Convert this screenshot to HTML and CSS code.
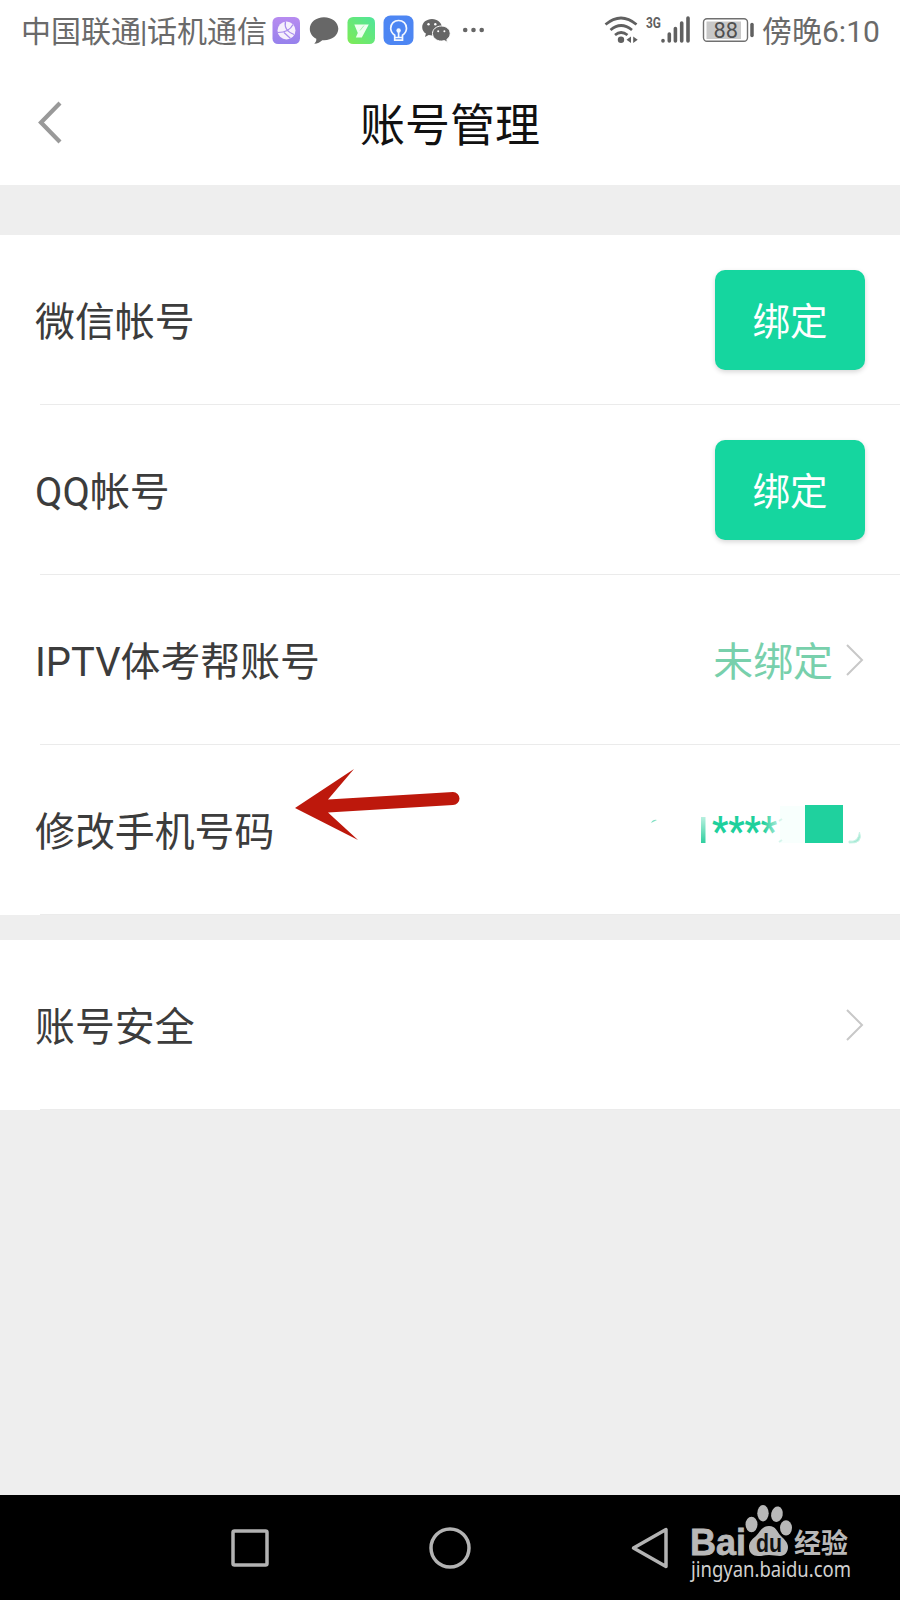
FILE: index.html
```
<!DOCTYPE html>
<html lang="zh-CN">
<head>
    <meta charset="UTF-8">
    <meta name="viewport" content="width=device-width, initial-scale=1.0">
    <title>账号管理</title>
    <link rel="stylesheet" href="styles.css">
</head>
<body>
    <div class="status-bar">
        <span class="carrier">中国联通<span class="bar">|</span>话机通信</span>
        <!-- notification icons -->
        <svg class="status-icons" width="214" height="60" viewBox="270 0 214 60">
            <defs>
                <linearGradient id="purple" x1="0" y1="0" x2="0" y2="1">
                    <stop offset="0" stop-color="#b78bf0"/><stop offset="1" stop-color="#9681ec"/>
                </linearGradient>
                <linearGradient id="green" x1="1" y1="0" x2="0" y2="1">
                    <stop offset="0" stop-color="#4fe59c"/><stop offset="1" stop-color="#7eeb55"/>
                </linearGradient>
            </defs>
            <rect x="272.500" y="17" width="27.500" height="27" rx="5.500" fill="url(#purple)"/>
            <circle cx="286.500" cy="30.500" r="9" fill="#f5effc"/>
            <path d="M285.500 21.500q-2 9 8.500 13M293 24.500q-4 8-15 8M284 32.500l6.500 6" fill="none" stroke="#a689ec" stroke-width="1.200"/>
            <path d="M324 17.300c-8 0-14.200 5-14.200 11.500 0 4.500 2.600 8 6.500 10 .2 2-.5 3.500-2 5 3.200-.3 6-1.700 8-3.600 8.800.8 16-4.400 16-11.400 0-6.500-6.300-11.500-14.300-11.500z" fill="#676767"/>
            <rect x="347.500" y="17" width="27.500" height="27" rx="5.500" fill="url(#green)"/>
            <path d="M354.300 24.500h14.500l-7 13h-6l2-4.500z" fill="#eefff0"/>
            <path d="M360 30.500l4-5" stroke="#a5f2b0" stroke-width="1"/>
            <rect x="383.500" y="15.500" width="30" height="29.500" rx="7" fill="#4d86f3"/>
            <g fill="none" stroke="#f4f8ff" stroke-width="1.700">
                <path d="M394.700 37.500v-2.200c-2.700-1.900-4-4-4-7 0-4.600 3.400-7.800 7.900-7.800s7.900 3.200 7.900 7.800c0 3-1.300 5.100-4 7v2.200zM394.700 37.500v2.700h7.800v-2.700M398.600 30v7"/>
            </g>
            <circle cx="398.600" cy="30.500" r="2.200" fill="#f4f8ff"/>
            <path d="M432 19c-5.600 0-9.800 3.600-9.800 8.200 0 2.600 1.400 4.900 3.700 6.400l-.9 3.300 3.700-2c1 .3 2.300.5 3.300.5 5.500 0 9.800-3.700 9.800-8.200s-4.300-8.200-9.800-8.200z" fill="#666"/>
            <path d="M441.400 26c-5 0-8.900 3.300-8.900 7.500s3.900 7.600 8.900 7.600c1 0 2-.2 3-.5l3.200 1.800-.8-2.900c2-1.300 3.400-3.500 3.400-6 0-4.200-3.900-7.500-8.800-7.500z" fill="#666" stroke="#fff" stroke-width="1"/>
            <g fill="#fff"><circle cx="428.500" cy="24.300" r="1.200"/><circle cx="435.300" cy="24.300" r="1.200"/><circle cx="438.200" cy="31.200" r="1"/><circle cx="444.400" cy="31.200" r="1"/></g>
            <g fill="#666"><circle cx="465.200" cy="30" r="2.300"/><circle cx="473.500" cy="30" r="2.300"/><circle cx="481.700" cy="30" r="2.300"/></g>
        </svg>
        <!-- wifi, signal, battery -->
        <svg class="system-icons" width="152" height="60" viewBox="603 0 152 60">
            <g fill="none" stroke="#606060" stroke-width="2.700">
                <path d="M605.500 24.500q15.500-13 31 0M610.500 30q10.500-9 21.500 0M615 35q6-5 12.500 0"/>
            </g>
            <circle cx="621" cy="39.800" r="3.200" fill="#606060"/>
            <path d="M631 36.500v6.500l-4.500-3.200zM633.200 36.500v6.500l4.500-3.200z" fill="#606060"/>
            <text class="net" x="646" y="28" textLength="15" lengthAdjust="spacingAndGlyphs">3G</text>
            <g stroke="#606060" stroke-width="3.600" stroke-linecap="round">
                <path d="M663 40.500v.5M669.300 34v7M675.400 28.500v12.500M681.700 23v18M688 18v23"/>
            </g>
            <rect x="703.500" y="18.800" width="44" height="22.500" rx="3.500" fill="#fff" stroke="#707070" stroke-width="1.400"/>
            <rect x="706.500" y="21.500" width="34.500" height="17.500" fill="#c8c8c8"/>
            <text class="level" x="713.500" y="37.800" textLength="24.500" lengthAdjust="spacingAndGlyphs">88</text>
            <path d="M752 24.500v11" stroke="#606060" stroke-width="3.500" stroke-linecap="round"/>
        </svg>
        <span class="time">傍晚6:10</span>
    </div>

    <div class="header">
        <svg class="back" width="30" height="48" viewBox="0 0 30 48">
            <path d="M25 4L6 23.500l19 19.500" fill="none" stroke="#999" stroke-width="4.200"/>
        </svg>
        <h1>账号管理</h1>
    </div>

    <div class="list">
        <div class="row">
            <span class="label">微信帐号</span>
            <button class="bind">绑定</button>
        </div>
        <div class="row">
            <span class="label">QQ帐号</span>
            <button class="bind">绑定</button>
        </div>
        <div class="row">
            <span class="label">IPTV体考帮账号</span>
            <span class="value">未绑定</span>
            <svg class="arrow" width="20" height="34" viewBox="0 0 20 34">
                <path d="M2 2l15 15L2 32" fill="none" stroke="#c8c8c8" stroke-width="2"/>
            </svg>
        </div>
        <div class="row">
            <span class="label">修改手机号码</span>
            <!-- masked phone number -->
            <svg class="phone" width="220" height="50" viewBox="645 798 220 50">
                <defs>
                    <linearGradient id="fade" x1="0" y1="0" x2="0" y2="1">
                        <stop offset="0" stop-color="#b8f0df"/><stop offset="1" stop-color="#2fcf9f"/>
                    </linearGradient>
                    <linearGradient id="stars" gradientUnits="userSpaceOnUse" x1="712" y1="0" x2="776" y2="0">
                        <stop offset="0" stop-color="#1fd09c"/><stop offset=".8" stop-color="#1fd09c"/><stop offset="1" stop-color="#9be6d0"/>
                    </linearGradient>
                </defs>
                <path d="M651 823q2-4 6-3l-4 2z" fill="#7fdfc2"/>
                <rect x="701" y="817" width="4.500" height="26" fill="url(#fade)"/>
                <rect x="780" y="806" width="25" height="37" fill="#f8fffd"/>
                <text class="stars" x="712" y="845" textLength="65" lengthAdjust="spacingAndGlyphs" fill="url(#stars)">****</text>
                <path d="M779 821l3-2M779 842l3-2" stroke="#d5f5ec" stroke-width="2"/>
                <rect x="805" y="805" width="38" height="38" fill="#1fd19e"/>
                <path d="M849 841q9 2 10.500-9 4 12-10.500 11z" fill="#a6ead5" stroke="#c9f3e6"/>
            </svg>
        </div>
        <svg class="pointer" width="170" height="76" viewBox="0 0 170 76">
            <path d="M1 40L60 1 34 31.500 159 24a6.500 6.500 0 0 1 0 13L34 44.500 64 72z" fill="#bd180c"/>
        </svg>
    </div>

    <div class="list">
        <div class="row">
            <span class="label">账号安全</span>
            <svg class="arrow" width="20" height="34" viewBox="0 0 20 34">
                <path d="M2 2l15 15L2 32" fill="none" stroke="#c8c8c8" stroke-width="2"/>
            </svg>
        </div>
    </div>

    <div class="nav-bar">
        <svg width="44" height="44" viewBox="0 0 44 44"><rect x="5" y="5" width="34" height="34" rx="1.500"/></svg>
        <svg width="44" height="44" viewBox="0 0 44 44"><circle cx="22" cy="22" r="19"/></svg>
        <svg width="44" height="44" viewBox="0 0 44 44"><path d="M5.500 22L38 3.500v37z" stroke-linejoin="round"/></svg>
        <svg class="watermark" width="170" height="90" viewBox="688 1500 170 90">
            <text class="bai" x="690" y="1554" textLength="56" lengthAdjust="spacingAndGlyphs">Bai</text>
            <g class="paw">
                <ellipse cx="751.500" cy="1523.500" rx="6" ry="7.800"/>
                <ellipse cx="763" cy="1512.300" rx="5.700" ry="8.200"/>
                <ellipse cx="777" cy="1513.200" rx="5.800" ry="7.800" transform="rotate(12 777 1513)"/>
                <ellipse cx="786" cy="1526.800" rx="6" ry="7.600"/>
                <path d="M769 1525c-7 0-9 6-13 10-5 4-7 7-7 11 0 6 4 9 9 9 4 0 7-1 11-1s7 1 11 1c5 0 8-4 8-9 0-4-3-7-7-11s-5-10-12-10z"/>
            </g>
            <text class="du" x="756" y="1550.500" textLength="26" lengthAdjust="spacingAndGlyphs">du</text>
            <text class="jy" x="794" y="1551.500" textLength="54" lengthAdjust="spacingAndGlyphs">经验</text>
            <text class="url" x="691" y="1575.500" textLength="160" lengthAdjust="spacingAndGlyphs">jingyan.baidu.com</text>
        </svg>
    </div>
</body>
</html>
```
FILE: styles.css
```
* {
    box-sizing: border-box;
}

body {
    display: flex;
    flex-direction: column;
    height: 1600px;
    margin: 0;
    background-color: #eee;
    color: #3c3c3c;
    font-family: Roboto, "Noto Sans CJK SC", sans-serif;
    overflow: hidden;
}

svg {
    display: block;
    flex-shrink: 0;
    overflow: visible;
}

/* Status bar */
.status-bar {
    display: flex;
    align-items: center;
    height: 60px;
    padding-left: 21px;
    background-color: #fff;
    color: #6a6a6a;
    font-size: 30px;
    line-height: 60px;
    white-space: nowrap;
}

.carrier {
    width: 249px;
    padding-top: 3px;
}

.bar {
    display: inline-block;
    width: 6px;
    text-indent: -1px;
}

.system-icons {
    margin-left: 119px;
}

.time {
    margin-left: 7px;
    padding-top: 3px;
}

.net {
    font: bold 15px Roboto, sans-serif;
    fill: #606060;
}

.level {
    font: 22px Roboto, sans-serif;
    fill: #505050;
}

/* Title */
.header {
    display: flex;
    align-items: center;
    height: 125px;
    padding: 0 35px;
    margin-bottom: 50px;
    background-color: #fff;
}

.header h1 {
    flex: 1;
    margin: 0 30px 0 0;
    padding-top: 9px;
    color: #111;
    font-size: 45px;
    font-weight: 400;
    line-height: 60px;
    text-align: center;
}

/* Account rows */
.list {
    position: relative;
    margin-bottom: 25px;
    background-color: #fff;
}

.row {
    display: flex;
    align-items: center;
    height: 170px;
    padding: 0 35px;
    /* divider starts 40px from the left */
    background: linear-gradient(#ebebeb, #ebebeb) 40px 100% / 100% 1px no-repeat;
    font-size: 39.900px;
}

.label {
    flex: 1;
    padding-bottom: 3px;
}

.bind {
    width: 150px;
    height: 100px;
    padding: 0 0 3px;
    border: 0;
    border-radius: 10px;
    background-color: #15d69f;
    box-shadow: 0 2px 5px rgba(0, 0, 0, 0.16);
    color: #fff;
    font-family: inherit;
    font-size: 37.500px;
}

.value {
    padding-bottom: 3px;
    color: #78d0ac;
}

.arrow {
    margin-left: 12px;
}

.phone {
    margin-bottom: 14px;
}

.stars {
    font: bold 40px Roboto, sans-serif;
}

/* Red arrow over the list */
.pointer {
    position: absolute;
    left: 294px;
    top: 533px;
}

/* Android navigation */
.nav-bar {
    position: relative;
    display: flex;
    justify-content: center;
    align-items: center;
    gap: 156px;
    height: 105px;
    margin-top: auto;
    background-color: #000;
    fill: none;
    stroke: #b3b3b3;
    stroke-width: 3.500;
}

.watermark {
    position: absolute;
    left: 688px;
    top: 6px;
    fill: #b8b8b8;
    stroke: none;
}

.bai {
    font: bold 37px "Liberation Sans", sans-serif;
    stroke: #b8b8b8;
    stroke-width: 0.800;
}

.du {
    font: bold 25px "Liberation Sans", sans-serif;
    fill: #111;
}

.jy {
    font: bold 27px "Noto Sans CJK SC", sans-serif;
}

.url {
    font: 21px "Noto Sans", sans-serif;
    fill: #d0d0d0;
}
```
